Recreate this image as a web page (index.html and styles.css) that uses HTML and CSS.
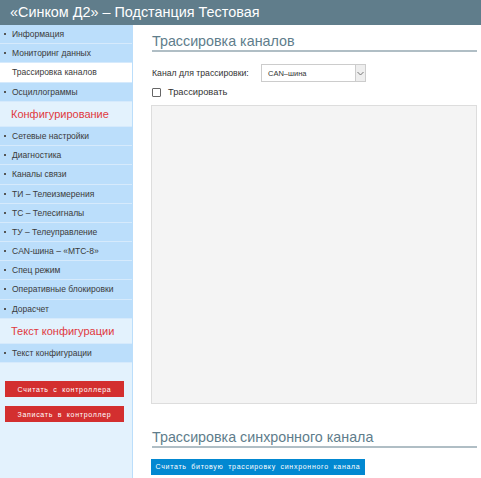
FILE: index.html
```html
<!DOCTYPE html>
<html>
<head>
<meta charset="utf-8">
<link rel="stylesheet" href="styles.css">
</head>
<body>
<div class="header">«Синком Д2» – Подстанция Тестовая</div>
<div class="layout">
  <div class="sidebar">
    <ul class="menu">
      <li class="item">Информация</li>
      <li class="item">Мониторинг данных</li>
      <li class="item active">Трассировка каналов</li>
      <li class="item">Осциллограммы</li>
      <li class="group">Конфигурирование</li>
      <li class="item">Сетевые настройки</li>
      <li class="item">Диагностика</li>
      <li class="item">Каналы связи</li>
      <li class="item">ТИ – Телеизмерения</li>
      <li class="item">ТС – Телесигналы</li>
      <li class="item">ТУ – Телеуправление</li>
      <li class="item">CAN-шина – «МТС-8»</li>
      <li class="item">Спец режим</li>
      <li class="item">Оперативные блокировки</li>
      <li class="item">Дорасчет</li>
      <li class="group">Текст конфигурации</li>
      <li class="item">Текст конфигурации</li>
    </ul>
    <div class="actions">
      <button class="btn btn-red">Считать с контроллера</button>
      <button class="btn btn-red">Записать в контроллер</button>
    </div>
  </div>
  <div class="main">
    <h2 class="title">Трассировка каналов</h2>
    <div class="row">
      <span class="label">Канал для трассировки:</span>
      <div class="select"><span class="select-text">CAN–шина</span><span class="select-arrow"><svg width="7" height="5" viewBox="0 0 7 5"><path d="M0.5 1 L3.5 4 L6.5 1" fill="none" stroke="#777" stroke-width="1"/></svg></span></div>
    </div>
    <label class="check"><span class="box"></span>Трассировать</label>
    <div class="trace"></div>
    <h2 class="title title2">Трассировка синхронного канала</h2>
    <button class="btn btn-blue">Считать битовую трассировку синхронного канала</button>
  </div>
</div>
</body>
</html>
```
FILE: styles.css
```css
html, body {
  margin: 0;
  padding: 0;
  background: #fff;
  font-family: "Liberation Sans", Arial, sans-serif;
  width: 481px;
  height: 478px;
  overflow: hidden;
}
.header {
  height: 25px;
  background: #607d8b;
  color: #fff;
  font-size: 14.4px;
  line-height: 24px;
  padding-left: 10px;
}
.layout {
  display: flex;
  height: 453px;
}
.sidebar {
  width: 132px;
  background: #e3f2fd;
  border-right: 1px solid #bbdefb;
  flex: none;
}
.menu {
  list-style: none;
  margin: 0;
  padding: 0;
}
.item {
  height: 18.2px;
  line-height: 18.2px;
  font-size: 8.5px;
  color: #3a3a3a;
  background: #bbdefb;
  border-bottom: 1px solid #d6eafc;
  padding-left: 12px;
  position: relative;
}
.item::before {
  content: "";
  position: absolute;
  left: 4px;
  top: 8px;
  width: 2px;
  height: 2px;
  background: #555;
}
.item.active {
  background: #fff;
}
.item.active::before { display: none; }
.group {
  height: 24.2px;
  line-height: 24.2px;
  font-size: 11px;
  color: #e0393e;
  background: #e3f2fd;
  padding-left: 11px;
  border-bottom: 1px solid #d6eafc;
}
.actions {
  padding: 18px 8px 0 5px;
  display: flex;
  flex-direction: column;
  gap: 9px;
}
.btn {
  border: none;
  color: #fff;
  font-family: "Liberation Sans", Arial, sans-serif;
  font-size: 7px;
  letter-spacing: 0.7px;
  word-spacing: 2px;
  height: 16px;
  padding: 0;
  text-align: center;
  white-space: nowrap;
}
.btn-red {
  background: #d32f2f;
  width: 119px;
}
.btn-blue {
  background: #0288d1;
  width: 214px;
  margin-left: -1px;
}
.main {
  flex: 1;
  padding: 8px 4px 0 19px;
}
.title {
  margin: 0;
  font-weight: normal;
  font-size: 14.3px;
  color: #607d8b;
  border-bottom: 2px solid #b0bec5;
  line-height: 17px;
  padding-bottom: 0;
}
.row {
  display: flex;
  align-items: center;
  margin-top: 12px;
  height: 18px;
}
.label {
  font-size: 8.7px;
  color: #333;
  width: 109px;
}
.select {
  width: 103px;
  height: 16px;
  border: 1px solid #ccc;
  display: flex;
  align-items: center;
  background: #fff;
}
.select-text {
  flex: 1;
  font-size: 7.5px;
  padding-left: 6px;
  color: #333;
}
.select-arrow {
  width: 9px;
  height: 16px;
  border-left: 1px solid #ccc;
  background: #eee;
  display: flex;
  align-items: center;
  justify-content: center;
}
.check {
  display: flex;
  align-items: center;
  font-size: 9.3px;
  color: #333;
  margin-top: 3px;
  height: 14px;
}
.box {
  width: 7px;
  height: 7px;
  border: 1px solid #666;
  border-radius: 1px;
  margin-right: 7px;
  background: #fff;
}
.trace {
  margin-top: 6px;
  height: 297px;
  background: #f4f4f4;
  border: 1px solid #ddd;
  margin-left: -1px;
}
.title2 {
  margin-top: 25px;
  margin-bottom: 7px;
}
```
